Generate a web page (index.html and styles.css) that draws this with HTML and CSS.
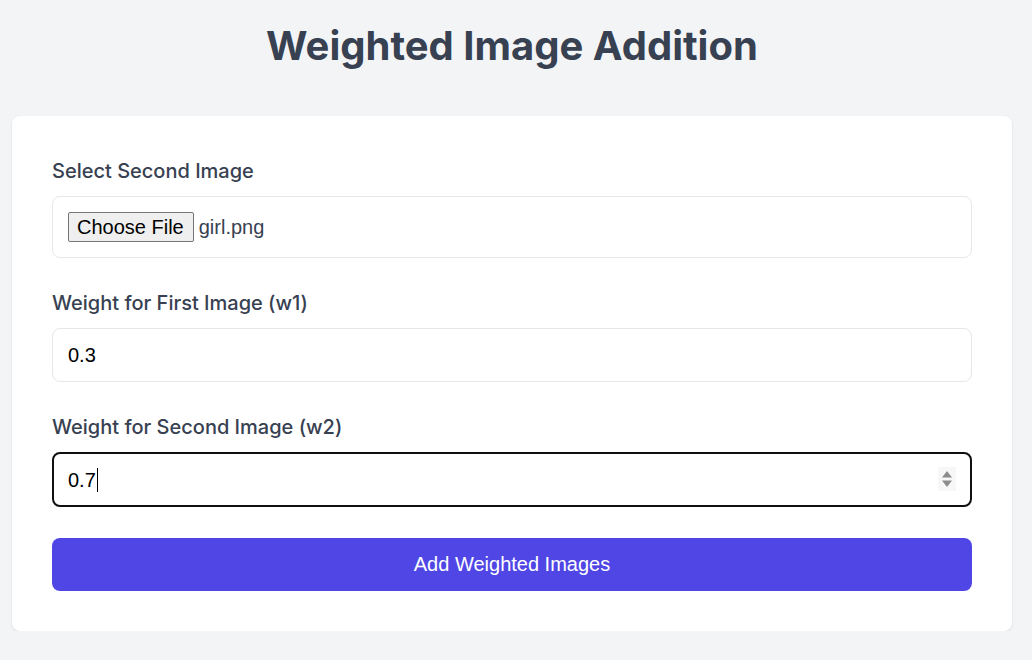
FILE: index.html
```html
<!DOCTYPE html>
<html lang="en">
<head>
<meta charset="utf-8">
<title>Weighted Image Addition</title>
<link rel="stylesheet" href="styles.css">
</head>
<body>
<main class="page">
  <h1 class="title">Weighted Image Addition</h1>
  <form class="card">
    <div class="field">
      <label class="label" for="img2">Select Second Image</label>
      <div class="box file-box">
        <span class="file-btn">Choose File</span>
        <span class="file-name">girl.png</span>
      </div>
    </div>
    <div class="field">
      <label class="label" for="w1">Weight for First Image (w1)</label>
      <input class="box input" id="w1" type="text" value="0.3">
    </div>
    <div class="field field-last">
      <label class="label" for="w2">Weight for Second Image (w2)</label>
      <div class="spin-wrap">
        <div class="box input focused" id="w2"><span>0.7</span><span class="caret"></span></div>
        <svg class="spinner" width="18" height="24" viewBox="0 0 18 24" aria-hidden="true">
          <rect x="0" y="0" width="18" height="24" fill="#f7f7f7"/>
          <path d="M4 10.5 L9 4 L14 10.5 Z" fill="#8c8c8c"/>
          <path d="M4 13.5 L9 20 L14 13.5 Z" fill="#8c8c8c"/>
        </svg>
      </div>
    </div>
    <button class="submit" type="button">Add Weighted Images</button>
  </form>
</main>
</body>
</html>
```

FILE: styles.css
```css
* { box-sizing: border-box; }
html, body { margin: 0; padding: 0; }
body {
  background: #f3f4f6;
  font-family: Inter, "Noto Sans", sans-serif;
  color: #374151;
}
.page {
  width: 1000px;
  margin-left: 12px;
  padding-top: 26px;
}
.title {
  margin: 0 0 50px;
  text-align: center;
  font-size: 40px;
  line-height: 40px;
  font-weight: 700;
  color: #374151;
}
.card {
  background: #fff;
  border-radius: 8px;
  box-shadow: 0 1px 3px rgba(0,0,0,0.08), 0 1px 2px rgba(0,0,0,0.04);
  padding: 40px;
  display: flex;
  flex-direction: column;
}
.field { margin-bottom: 30px; }
.field-last { margin-bottom: 31px; }
.label {
  display: block;
  font-size: 20px;
  line-height: 30px;
  font-weight: 500;
  color: #374151;
  margin-bottom: 10px;
}
.box {
  display: block;
  width: 100%;
  border: 1px solid #e5e7eb;
  border-radius: 8px;
  background: #fff;
  font-family: "Liberation Sans", Arial, sans-serif;
  font-size: 20px;
  color: #000;
}
.file-box {
  padding: 15px;
  display: flex;
  align-items: center;
  height: 62px;
}
.file-btn {
  display: inline-block;
  background: #efefef;
  border: 1px solid #767676;
  border-radius: 2px;
  padding: 2px 9px 2px 8px;
  line-height: 24px;
  color: #000;
  margin-right: 5px;
}
.file-name { color: #374151; }
.input {
  height: 54px;
  padding: 0 15px;
  line-height: 52px;
  outline: none;
}
.spin-wrap { position: relative; }
.focused {
  border: 2px solid #101010;
  padding: 0 14px;
  height: 55px;
  display: flex;
  align-items: center;
}
.caret {
  display: inline-block;
  width: 1px;
  height: 24px;
  background: #000;
  margin-left: 1px;
}
.spinner {
  position: absolute;
  right: 16px;
  top: 15px;
}
.submit {
  display: block;
  width: 100%;
  height: 53px;
  border: 0;
  border-radius: 8px;
  background: #4f46e5;
  color: #fff;
  font-family: "Liberation Sans", Arial, sans-serif;
  font-size: 20px;
}
```
